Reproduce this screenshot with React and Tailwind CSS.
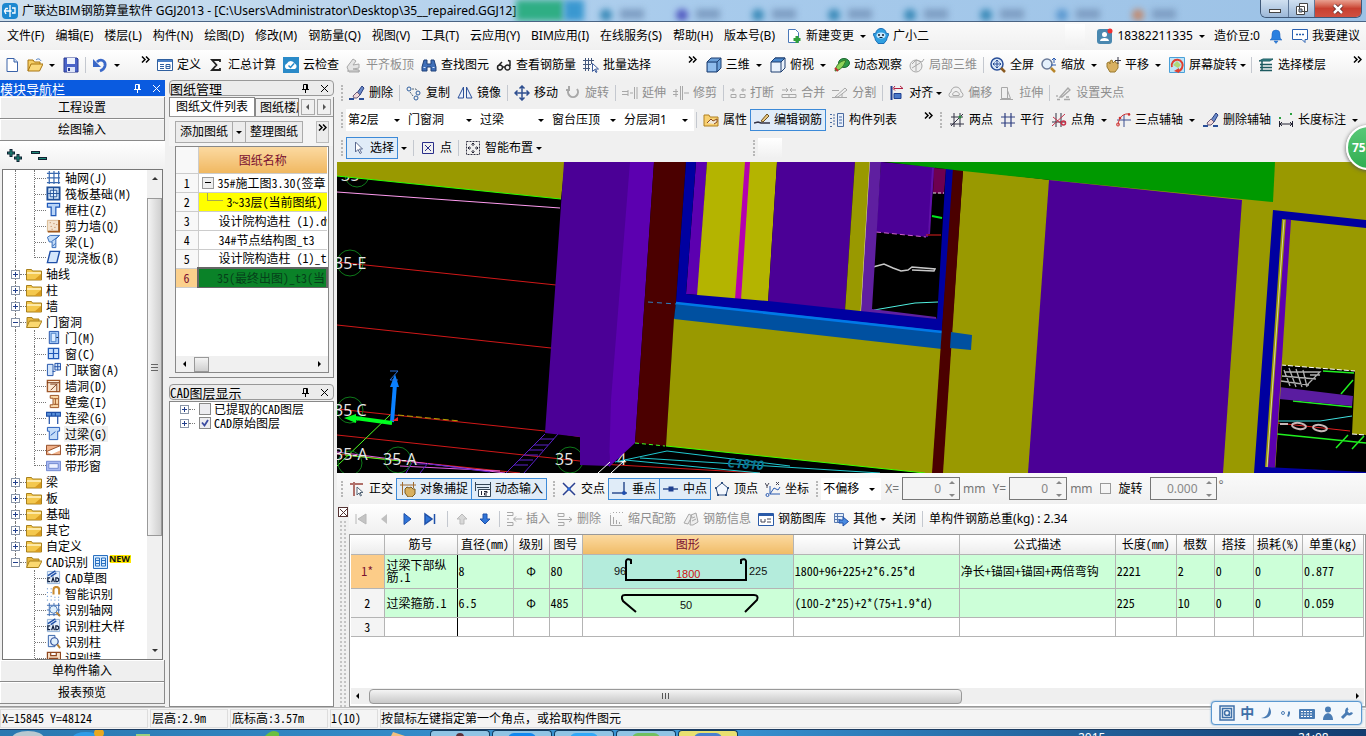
import React from "react";

const UI = "font-['Noto_Sans','Noto_Sans_CJK_SC',sans-serif]";
const SONG = "font-['Noto_Sans_Mono_CJK_SC','Noto_Sans_CJK_SC',monospace]";

const B = "#2f5f9f";
const G = "#a8a8a8";

const shapes = {
  newFile: <><path d="M3 1.5h7l3.500 3.500v9.500H3z" fill="#fff" stroke="#3a62a8" /><path d="M10 1.500v3.500h3.500" fill="#cfe0f8" stroke="#3a62a8" /></>,
  open: <><path d="M1 14V3h5l1.500 2H13v3" fill="#f6cf67" stroke="#a87410" /><path d="M1 14l3-7h12l-3.500 7z" fill="#fbd97c" stroke="#a87410" /><path d="M9 3c2-2 4-1 5 1" fill="none" stroke="#4a7ac0" /></>,
  save: <><path d="M1 1h13l1 1v13H1z" fill="#4a63c8" stroke="#2a3a90" /><path d="M4 1h8v6H4z" fill="#eef2fc" /><path d="M4 10h8v5H4z" fill="#dde4f8" /><path d="M5 11h2v3H5z" fill="#2a3a90" /></>,
  undo: <><path d="M5 5c4-4 9-1 8 4-.500 2-2 4-5 5" fill="none" stroke="#3a68c8" strokeWidth="2.800" /><path d="M1 2v8h8z" fill="#3a68c8" /></>,
  define: <><path d="M.5 2.500h15v11H.5z" fill="#fff" stroke={B} /><path d="M1 3h14v2H1z" fill="#4a80c8" /><path d="M3 7.500h4M3 9.500h4M3 11.500h4M9 7.500h4v4H9zM9 9.500h4" fill="none" stroke={B} /></>,
  sigma: <path d="M12 5V3H4l4.500 5L4 13h8v-2" fill="none" stroke="#222" strokeWidth="1.800" />,
  cloudCheck: <><path d="M0 0h16v16H0z" fill="#2a8ac8" /><path d="M3.500 12a3 3 0 01.5-5.500 4 4 0 017.500 0 3 3 0 01.5 5.500z" fill="#fff" /><path d="M5.500 8.500l2 2 3.500-4" fill="none" stroke="#2a8ac8" strokeWidth="1.500" /></>,
  slabTop: <path d="M1 10l6-8 3 2-3 4 6-1v4l-6 1 6 1v2H3zM1 14h13" fill="#e4e4e4" stroke={G} />,
  find: <><path d="M3 3h3v4h4V3h3l2 7v4h-5v-4H6v4H1v-4z" fill="#3f6fb8" stroke="#1f4078" /><path d="M2.500 10.500h2M11.500 10.500h2" stroke="#cfe0ff" /></>,
  glasses: <path d="M1.500 10.500a2.500 2.500 0 105 0 2.500 2.500 0 10-5 0M9 10.500a2.500 2.500 0 105 0 2.500 2.500 0 10-5 0M6.500 10h2.500M2 9l4-4M14 9V4l-2-.5" fill="none" stroke="#222" strokeWidth="1.500" />,
  batch: <><path d="M2.500 1v13M5.500 1v13M8.500 1v6M0 3.500h11M0 7.500h8M0 11.500h7" stroke="#44577a" fill="none" /><path d="M9.500 6.500v8l2-2 1.500 3 1-.500-1.500-3h3z" fill="#fff" stroke="#3a5a9a" /></>,
  cube: <><path d="M1 5l4-4h10v10l-4 4H1z" fill="#6a9fd8" stroke="#1f3f70" /><path d="M1 5h10v10M11 5l4-4" fill="none" stroke="#1f3f70" /><path d="M2 6h8v8H2z" fill="#8fbcec" /></>,
  cubeTop: <><path d="M1 5l4-4h10v10l-4 4H1z" fill="#eaf2fc" stroke="#1f3f70" /><path d="M1 5l4-4h10l-4 4z" fill="#4a88cc" stroke="#1f3f70" /><path d="M11 5v10" stroke="#1f3f70" /></>,
  orbit: <><ellipse cx="10" cy="6" rx="5.500" ry="4.500" fill="#2f9a48" stroke="#1d6a30" /><path d="M1 14c1-6 5-10 11-11-2 6-5 10-11 11z" fill="#8fd458" stroke="#3a7a28" /><path d="M1 11l3 3" stroke="#c03030" strokeWidth="2" /></>,
  local3d: <><circle cx="7" cy="9" r="6" fill="#eee" stroke={G} /><path d="M3 7l4-4 6 2 2-3M7 3v11M3 11l8-5" fill="none" stroke={G} /></>,
  full: <><circle cx="7" cy="7" r="6" fill="#dceafa" stroke="#2a4f98" strokeWidth="1.500" /><path d="M7 3v8M3 7h8M5.500 4.500L7 3l1.500 1.500M5.500 9.500L7 11l1.500-1.500M4.500 5.500L3 7l1.500 1.500M9.500 5.500L11 7l-1.500 1.500" fill="none" stroke="#2a4f98" /><path d="M11 11l4 4" stroke="#8a5a20" strokeWidth="2.500" /></>,
  zoom: <><circle cx="6" cy="7" r="5" fill="#e4f0fc" stroke="#6a7a98" strokeWidth="1.500" /><path d="M10 11l4 4" stroke="#b8862a" strokeWidth="2.500" /><path d="M13 1v5M11 3l2-2 2 2M10 8h5" fill="none" stroke="#2a5ab0" /></>,
  pan: <><path d="M2 6l2-1 1 2V4l2-1 1 3 2-2 1 2 2 0v5l-3 4H5L2 10z" fill="#d8b060" stroke="#9a7a30" /><path d="M13 0v7M10 3.500h6" stroke="#334" /></>,
  rotScreen: <><path d="M.5.500h15v15H.5z" fill="#bfe4f8" stroke="#4aa0d8" /><path d="M4 8l4-4 4 4-3 3z" fill="#b0d878" /><path d="M3 10a5.500 5.500 0 1110 1 5 5 0 01-5 3" fill="none" stroke="#e04030" strokeWidth="2" /><path d="M5 14l5-3v5z" fill="#e04030" /></>,
  floors: <><path d="M1 4l4-2h10l-3 2z" fill="#3a8a90" stroke="#1d5a60" /><path d="M2 7.500h12M2 10.500h12M2 13.500h12M4 4v10" stroke="#1d5a60" strokeWidth="1.500" /></>,
  erase: <><path d="M8 8l5-7 2 2-4 7z" fill="#6a8ac8" stroke="#2a3f80" /><path d="M8 7l3 3-3 3H5L4 11z" fill="#f0d8d8" stroke="#6a5a7a" /><path d="M0 14h5M10 14h5" stroke="#2a4f98" strokeWidth="2" /></>,
  copy: <><circle cx="3" cy="4" r="2" fill="none" stroke={B} /><circle cx="12" cy="8" r="2" fill="none" stroke={B} /><circle cx="10" cy="13" r="2" fill="none" stroke={B} /><path d="M6 4h4l1 2M4 7l3 4" fill="none" stroke="#567" strokeDasharray="2 1" /></>,
  mirror: <path d="M6.500 2v11H1zM9.500 2v11H15z" fill="#e8f0fc" stroke="#2a4f98" />,
  move: <path d="M8 1v14M1 8h14M5.500 3.500L8 1l2.500 2.500M5.500 12.500L8 15l2.500-2.500M3.500 5.500L1 8l2.500 2.500M12.500 5.500L15 8l-2.500 2.500" fill="none" stroke="#2f4f90" strokeWidth="1.500" />,
  rotate: <path d="M4 4a5 5 0 108 0M4 1v4H1" fill="none" stroke={G} strokeWidth="2" />,
  extend: <path d="M0 6.500h6M0 9.500h6M6 5v6M8 8h3M12.500 2v12M15 2v12" fill="none" stroke={G} />,
  trim: <path d="M0 6.500h5M0 9.500h5M7.500 1v14M9.500 1v14M11 8h5M3 4v8" fill="none" stroke={G} />,
  breakI: <path d="M0 5h5M11 5h5M3 3v4M13 3v4M1 9.500h5v3H1zM10 9.500h5v3h-5z" fill="none" stroke={G} />,
  merge: <path d="M1 5h5M10 5h5M5 3l2 2-2 2M11 3L9 5l2 2M1 9.500h14v3H1zM8 9v4" fill="none" stroke={G} />,
  split: <path d="M0 5.500h7M0 12.500h15M3 12L13 3l2 2-9 7zM10 9v4" fill="none" stroke={G} />,
  align: <><path d="M2.500 1v14" stroke="#1f3f90" strokeWidth="2" /><path d="M5 8.500h7v5H5z" fill="#4a78c8" stroke="#1f3f90" /><path d="M5 3.500h9M11 1l3 2.500M6 1L4 3.500l2 2" fill="none" stroke="#b02040" /></>,
  offset: <path d="M2 12a3 3 0 011-5 5 5 0 0110 0 3 3 0 011 5zM5 10.500a2 2 0 011-3 2.500 2.500 0 014 0 2 2 0 011 3z" fill="none" stroke={G} />,
  stretch: <path d="M2.500 2.500h6v11h-6zM8.500 5.500l3 8h-9M1 14.500h13" fill="none" stroke={G} />,
  grip: <path d="M1 14.500h3M8 14.500h6M4 12L12 3l2 2-8 7zM1 10v2M10 12h3" fill="none" stroke={G} strokeWidth="1.300" />,
  props: <><path d="M1 14V3h5l1 2h8v9z" fill="#f8d070" stroke="#b08020" /><path d="M4 11l4-4 2 2 4-2v3l-3 2" fill="#f0e8d8" stroke="#8a4a20" /></>,
  editBar: <><path d="M0 11l4-1 3 1 9 0" fill="none" stroke="#334" strokeWidth="1.500" /><path d="M7 9l6-7 2 2-6 6z" fill="#e8c880" stroke="#6a5020" /></>,
  list: <><path d="M1 2.500h2M1 6.500h2M1 10.500h2M1 14.500h2M5 2v12" stroke="#4a6aa0" strokeDasharray="2 1" /><path d="M8.500 1.500h6v13h-6z" fill="#e8f0fc" stroke="#4a6aa0" /><path d="M10 5h3M10 8h3M10 11h3" stroke="#4a6aa0" /></>,
  twoPt: <><path d="M5 1v14M11 1v14M1 12h14M2 5h12" stroke="#334" /><path d="M2 14L14 2" stroke="#334" /><circle cx="11" cy="5" r="1.500" fill="#2a8a3a" /></>,
  parallel: <path d="M5 1v14M11 1v14M1 5h14M1 11h14" stroke="#2f3f80" strokeWidth="1.200" />,
  angle: <><path d="M5 1v14M10 1v14M1 10h14" stroke="#334" /><path d="M1 14L14 2M2 5l10 8" stroke="#c83048" /><circle cx="12.500" cy="11" r="2" fill="none" stroke="#c83048" strokeWidth="1.500" /></>,
  three: <><path d="M9 3v12M2 8h14" stroke="#3a4f90" /><path d="M15 2C8 1 4 5 3 13" fill="none" stroke="#d03030" /><circle cx="14" cy="2.500" r="1.300" fill="#d03030" /><circle cx="5" cy="6" r="1.300" fill="#d03030" /><circle cx="3" cy="12.500" r="1.500" fill="none" stroke="#d03030" /></>,
  dim: <><path d="M1.500 9v6M14.500 9v6M1.500 12h13M4 10l-2 2 2 2M12 10l2 2-2 2" fill="none" stroke="#223" /><path d="M1 5h2v2H1zM12 1h2v2h-2z" fill="#2aa040" /></>,
  cursor: <path d="M5.500 2v10l2.500-2.500 2 4 1.500-.800-2-3.700h3z" fill="#fff" stroke="#5a6a90" />,
  point: <path d="M2.500 2.500h11v11h-11zM5 5l6 6M11 5l-6 6" fill="none" stroke="#2a2f8a" />,
  smart: <><path d="M1.500 1.500h13v13h-13z" fill="none" stroke="#334" strokeDasharray="2 1" /><path d="M8 3v3M8 10v3M3 8h3M10 8h3M6.500 4.500L8 3l1.500 1.500M6.500 11.500L8 13l1.500-1.500M4.500 6.500L3 8l1.500 1.500M11.500 6.500L13 8l-1.500 1.500" stroke="#223" /></>,
  ortho: <><path d="M1 3h13M5 1v14" stroke="#b0706a" strokeWidth="2" /><path d="M8 6v8l2-2 1.500 3 1-.500-1.500-3h3z" fill="#fff" stroke="#567" /></>,
  snap: <><path d="M2.500 1v13M13.500 1v6M0 4h16" stroke="#a06a30" /><path d="M5 8l2-2 2 1 2-1 2 2 2 0v5l-3 3H8l-3-4z" fill="#d8b060" stroke="#7a5a20" /></>,
  dyn: <><path d="M.5 1v9M15.500 1v9M0 3.500h16M2 6.500h12" stroke="#345" /><path d="M3.500 8.500h12v7h-12z" fill="#fff" stroke="#345" /><path d="M6.500 10v4M9 10.500h3v1.500H9.500v2H12" fill="none" stroke="#223" /></>,
  cross: <><path d="M2 2l12 12M14 2L2 14" stroke="#2a3f90" strokeWidth="1.500" /><circle cx="8" cy="8" r="1.800" fill="#2a6ad8" /></>,
  perp: <><path d="M0 12h15M12 1v11" stroke="#2f4f90" strokeWidth="1.500" /><circle cx="12" cy="12" r="2" fill="#1f4fb0" /></>,
  mid: <><path d="M0 8h15" stroke="#2f4f90" strokeWidth="1.500" /><path d="M5.500 5.500h5v5h-5z" fill="#1f3f90" /></>,
  vertex: <><path d="M8 2l6 5-2 7H4L2 7z" fill="#f4f8fe" stroke="#2f4f80" /><path d="M7 1h2v2H7zM13 6h2v2h-2zM1 6h2v2H1zM3 13h2v2H3zM11 13h2v2h-2z" fill="#2f4f80" /></>,
  coord: <><path d="M5 5v8h10M5 13l4-6 4 2 2-3" fill="none" stroke="#2a5ab0" /><path d="M0 2l2 3 2-3M2 5v2M11 1l3 3M14 1l-3 3" fill="none" stroke="#445" /><circle cx="2.500" cy="14" r="1.500" fill="none" stroke="#2a5ab0" /></>,
  first: <path d="M3 3v10M13 3v10L5 8z" fill="#c4c4c4" stroke="#b8b8b8" />,
  prev: <path d="M11 3v10L5 8z" fill="#c0c0c0" />,
  next: <path d="M5 2.500v11L12 8z" fill="#2f74d8" stroke="#1f50a8" />,
  last: <path d="M3 3v10l7-5zM12.500 3v10" fill="#2f74d8" stroke="#1f50a8" strokeWidth="1.500" />,
  up: <path d="M8 3l5 5h-3v5H6V8H3z" fill="#d8d8d8" stroke="#bbb" />,
  down: <path d="M8 13L3 8h3V3h4v5h3z" fill="#2f74d8" stroke="#1f50a8" />,
  insert: <path d="M1 1.500h6v3H1M1 11.500h6v3H1M1 8h2M8 8h8M10 5.500L7.500 8l2.500 2.500" fill="none" stroke={G} />,
  remove: <path d="M1 2.500h6v3H1zM1 11.500h6v3H1M1 8.500h14M12 6l3 2.500L12 11" fill="none" stroke={G} />,
  scaleBar: <path d="M2.500 4v10.500H14M2.500 2v.500M5 1.500h1M8 1.500h1M11 1.500h1M14 1.500h1M5.500 6v7M8.500 9v4M11.500 11v2" fill="none" stroke={G} />,
  info: <path d="M1 12l5-9 3 2-4 8zM8 4l5-2 2 9-5 3H7zM9 7l3-1M9 10l4-2" fill="#eee" stroke={G} />,
  lib: <><path d="M.5 2.500h15v12H.5z" fill="#fff" stroke="#2a5aa8" /><path d="M1 3h14v2H1z" fill="#2a5aa8" /><path d="M3 8v3h4V8M9 8h4M9 11h4" fill="none" stroke="#445" /></>,
  other: <><path d="M1.500 2.500h9v9h-9z" fill="#e4eefa" stroke="#5a7ab0" /><path d="M1.500 5.500h9M1.500 8.500h6M4.500 2.500v9" stroke="#5a7ab0" /><path d="M6 9h4V6l5.500 4.500L10 15v-3H6z" fill="#4a8ae0" stroke="#1f50a8" /></>,
  newChange: <><path d="M2.500 1.500h7l3 3v10h-10z" fill="#fff" stroke="#4a78b8" /><path d="M11 8v7M7.500 11.500h7" stroke="#2fa03a" strokeWidth="3" /></>,
  mascot: <><path d="M0 6l3-1a5 4.500 0 0110 0l3 1-2 4a6 5 0 01-2 4l-1 1.500H5L4 14a6 5 0 01-2-4z" fill="#2f9fe0" stroke="#1a6fb8" /><ellipse cx="8" cy="7.500" rx="4.500" ry="3" fill="#c8e8ff" /><circle cx="6" cy="7" r="1" fill="#123" /><circle cx="10" cy="7" r="1" fill="#123" /><path d="M6.500 9.500h3" stroke="#123" /></>,
  avatar: <><rect y="1" width="15" height="15" rx="3" fill="#4a88b0" /><circle cx="7.500" cy="6.500" r="2.500" fill="#fff" /><path d="M3 13c0-4 9-4 9 0z" fill="#fff" /><circle cx="13" cy="3" r="2.500" fill="#f03030" /></>,
  bell: <path d="M2 12c2-1 2-3 2-6a4 4 0 018 0c0 3 0 5 2 6zM6 13h4l-2 2.500z" fill="#2a80e0" stroke="#1f60b8" strokeWidth=".5" />,
  chat: <><path d="M.5 1.500h15v10H13v3l-3-3H.5z" fill="#fff" stroke="#2a60b0" /><path d="M4 6.500h2M7 6.500h2M10 6.500h2" stroke="#2a60b0" strokeWidth="1.500" /></>,
  /* tree */
  folder: <><path d="M.5 3.500h5l1 1.500h9v9H.5z" fill="#f4c84e" stroke="#a8801c" /><path d="M1 6h14v2H1z" fill="#fde9a8" /><path d="M8 14h7V8z" fill="#d89c20" /></>,
  folderOpen: <><path d="M1 13V3.500h5l1 1.500h6v2" fill="#e8b840" stroke="#a8801c" /><path d="M.5 13.500l3-6.500H16l-3.500 6.500z" fill="#fbd870" stroke="#a8801c" /></>,
  axisNet: <path d="M3.500 1v14M8.500 1v14M13.500 1v14M1 3.500h14M1 8.500h14M1 13.500h14" stroke="#3a6ab0" strokeWidth="1.300" />,
  raft: <><path d="M1.500 1.500h13v13h-13z" fill="#dcecfc" stroke="#1f4f98" strokeWidth="2" /><path d="M4.500 4.500h7v7h-7zM8 2v12M2 8h12" fill="none" stroke="#1f4f98" /></>,
  column: <path d="M1.500 1.500h13v4h-4v9h-5v-9h-4z" fill="#b8d4f8" stroke="#1f58b8" strokeWidth="1.300" />,
  shear: <><path d="M1.500 2.500h12v12h-12z" fill="#f4e4d0" stroke="#d8b890" /><path d="M14 2v12.500H2" fill="none" stroke="#a05a20" strokeWidth="2" /><path d="M4 5h1M8 6h1M5 9h1M9 10h1M11 7h1M6 12h1" stroke="#b07040" /></>,
  beamI: <path d="M1.500 3.500l3-2h10l-4 4v9h-4v-6l-3 0zM6 8l8-6M7 13l3-3" fill="#c4dcf8" stroke="#2f68b8" />,
  slab: <path d="M4.500 1.500h10l-3 12h-10z" fill="#d4e6fc" stroke="#1f4fa8" strokeWidth="1.500" />,
  door: <><path d="M3.500 1.500h10v13h-10z" fill="#a8ccf8" stroke="#1f50a8" /><path d="M5.500 3.500h5v9h-5z" fill="#dcecff" stroke="#4a80c8" /><path d="M11 8h2" stroke="#123" /></>,
  windowI: <path d="M2.500 2.500h11v11h-11zM8 2v12M3 8h10" fill="#c8e0fc" stroke="#1f58b8" strokeWidth="1.300" />,
  doorWin: <path d="M1.500 2.500h6v12h-6zM9.500 1.500h6v7h-6zM12.500 1v8M9 5h7M7 10h3" fill="#d4e6fc" stroke="#1f50a8" />,
  hole: <><path d="M1.500 2.500h13v12h-13z" fill="#fbe8d4" stroke="#a0582a" strokeWidth="1.500" /><path d="M4.500 6.500h7v8M5 13l7-7M1 5h13" fill="none" stroke="#7a3a18" /></>,
  niche: <path d="M4.500 1.500h9v13h-9v-3h3v-7h-3zM8 5h5M8 11h5M10 5v6" fill="#fbd8a8" stroke="#9a5020" />,
  linkBeam: <path d="M.5 2.500h15v4h-15zM3.500 7v8M12.500 7v8M6 3v3M10 3v3" fill="#5a90d8" stroke="#1f50a8" strokeWidth="1.300" />,
  lintel: <path d="M1.500 1.500h13v4h-2v9h-9v-9h-2zM5 10l5-4" fill="#c4dcf8" stroke="#1f58b8" />,
  stripHole: <><path d="M.5 3.500h15v10H.5z" fill="#f0b088" stroke="#904820" /><path d="M1 10L15 4v5L6 13z" fill="#fff" /><path d="M1 10l14-6" stroke="#904820" /></>,
  stripWin: <><path d="M.5 3.500h15v10H.5z" fill="#a8b8f0" stroke="#7088d0" /><path d="M3 6h10v5H3z" fill="#eef2ff" stroke="#7088d0" /></>,
  cad: <><path d="M1.500 1.500h13v13h-13z" fill="#e4f0fc" stroke="#90b0d8" /><path d="M2 6l8-5M5 7l6-4" stroke="#1f50a8" strokeWidth="1.500" /><path d="M4.500 8.500H2v4h2.500M6 13l1.500-4.500L9 13M10.500 8.500v4h1.500l1.500-1v-2L12 8.500z" fill="none" stroke="#102040" strokeWidth="1.300" /></>,
  magnet: <><path d="M8 9V4a3 3 0 016 0v5" fill="none" stroke="#c88a30" strokeWidth="2.200" /><path d="M1 3h1M5 3h1M1 7h1M5 7h1M1 11h1M5 11h1M9 12h1M13 12h1M1 15h1M5 15h1M9 15h1M13 15h1" stroke="#3a78c8" /></>,
  gridFind: <><path d="M3.500 1v14M8.500 1v14M13.500 1v14M1 3.500h14M1 8.500h14M1 13.500h14" stroke="#3a6ab0" /><circle cx="8" cy="8" r="4" fill="#e0f0fc" stroke="#4a78b8" /><path d="M11 11l4 4" stroke="#b88030" strokeWidth="2" /></>,
  colFind: <><path d="M2.500 1.500h7v12h-7z" fill="#e8f0fc" stroke="#2f5fa8" /><circle cx="9" cy="8" r="4" fill="#e0f0fc" stroke="#2f4f98" strokeWidth="1.300" /><path d="M12 11l3 4" stroke="#b88030" strokeWidth="2" /></>,
  wallFind: <path d="M1.500 2.500h14v12h-14zM5 3v3h6V3M3 9h10" fill="#f8e0c8" stroke="#904820" strokeWidth="1.300" />,
};

const Ico = ({ n, className = "size-4" }) => (
  <svg viewBox="0 0 16 16" className={className + " shrink-0"} aria-hidden="true" fill="none">{shapes[n]}</svg>
);
const Tri = ({ d = "down", className = "" }) => {
  const p = { down: "M0 2h6L3 5z", up: "M0 4h6L3 1z", left: "M4 0v6L1 3z", right: "M2 0v6l3-3z" }[d];
  return <svg viewBox="0 0 6 6" className={"size-1.5 shrink-0 " + className} aria-hidden="true"><path d={p} fill="currentColor" /></svg>;
};
const Sep = () => <span className="-mx-px h-4 w-px shrink-0 bg-[#c4c8cf]" />;
const Grip = () => <span className="h-4 w-0 shrink-0 border-l-2 border-dotted border-[#b8b8b8]" />;
const Chevrons = () => <svg viewBox="0 0 9 7" className="h-[7px] w-[9px]" aria-hidden="true" fill="none"><path d="M1 .500l3 3-3 3M5 .500l3 3-3 3" stroke="#000" strokeWidth="1.500" /></svg>;
const More = ({ className = "" }) => <button aria-label="更多" className={"mb-2.5 shrink-0 " + className}><Chevrons /></button>;

function Tool({ i, t, off, on, arrow, label }) {
  return (
    <button
      disabled={off}
      aria-label={t ? undefined : label}
      className={
        "flex h-[22px] shrink-0 items-center gap-1 whitespace-nowrap " +
        (on ? "-mx-1 border border-[#3c8ad8] bg-[#e0ecf8] px-[3px] " : "") +
        (off ? "text-[#8e8e8e]" : "text-black")
      }
    >
      {i && <Ico n={i} />}
      {t && <span>{t}</span>}
      {arrow === "near" && <Tri className="-mx-px" />}
      {arrow === "split" && <Tri className="mr-px ml-0.5" />}
    </button>
  );
}

const Combo = ({ v, w }) => (
  <label className={"relative flex h-[22px] shrink-0 items-center bg-white " + w}>
    <select aria-label={v} className="h-full w-full appearance-none bg-transparent pl-0.5 outline-none"><option>{v}</option></select>
    <Tri className="absolute right-1.5" />
  </label>
);
const bar = "flex shrink-0 items-center gap-[7px] overflow-hidden";

const leaf1 = [["axisNet", "轴网(J)"], ["raft", "筏板基础(M)"], ["column", "框柱(Z)"], ["shear", "剪力墙(Q)"], ["beamI", "梁(L)"], ["slab", "现浇板(B)"]];
const leaf2 = [["door", "门(M)"], ["windowI", "窗(C)"], ["doorWin", "门联窗(A)"], ["hole", "墙洞(D)"], ["niche", "壁龛(I)"], ["linkBeam", "连梁(G)"], ["lintel", "过梁(G)"], ["stripHole", "带形洞"], ["stripWin", "带形窗"]];
const leaf3 = [["cad", "CAD草图"], ["magnet", "智能识别"], ["gridFind", "识别轴网"], ["cad", "识别柱大样"], ["colFind", "识别柱"], ["wallFind", "识别墙"]];

const Expander = ({ open }) => (
  <button aria-label={open ? "折叠" : "展开"} className="grid size-[9px] shrink-0 place-items-center border border-[#8a96a8] bg-white">
    <svg viewBox="0 0 5 5" className="size-[5px]"><path d={open ? "M0 2.500h5" : "M0 2.500h5M2.500 0v5"} stroke="#23408c" /></svg>
  </button>
);

function Leaf({ i, t, root = true, last, sel }) {
  return (
    <li className="flex h-4 shrink-0 items-stretch">
      <span className={"ml-3 w-[19px] shrink-0 " + (root ? "border-l border-dotted border-[#777]" : "")} />
      <span className={"flex w-3 shrink-0 " + (last ? "items-start" : "items-center border-l border-dotted border-[#777]")}>
        <span className={"w-full border-dotted border-[#777] " + (last ? "h-2 border-b border-l" : "border-t")} />
      </span>
      <Ico n={i} className="size-[15px]" />
      <span className={"ml-[3px] px-px leading-4 whitespace-nowrap " + (sel ? "bg-[#f0f0f0]" : "")}>{t}</span>
    </li>
  );
}
function Folder({ t, open, last, children }) {
  return (
    <li className="flex h-4 shrink-0 items-center">
      <span className="ml-2 flex h-full w-[9px] shrink-0 flex-col items-center">
        <span className="flex-1 border-l border-dotted border-[#777]" />
        <Expander open={open} />
        <span className={"flex-1 " + (last ? "" : "border-l border-dotted border-[#777]")} />
      </span>
      <span className="w-1.5 shrink-0 border-t border-dotted border-[#777]" />
      <Ico n={open ? "folderOpen" : "folder"} />
      <span className="ml-1 leading-4 whitespace-nowrap">{t}</span>
      {children}
    </li>
  );
}

const Pin = () => <svg viewBox="0 0 9 9" className="size-[9px]" aria-hidden="true"><path d="M2.500.500h4v5M2.500.500v5M5.500 1v4.500M1 5.500h7M4.500 6v3" stroke="currentColor" fill="none" /></svg>;
const X = () => <svg viewBox="0 0 9 9" className="size-[9px]" aria-hidden="true"><path d="M1 1l7 7M8 1L1 8" stroke="currentColor" fill="none" /></svg>;
const PanelHead = ({ t, active }) => (
  <div className={"flex h-4 shrink-0 items-center " + (active ? "bg-[#0a5be0] text-white" : "rounded-sm border border-[#999] bg-[#ececec]")}>
    <h2 className={"flex-1 text-[13px] leading-none whitespace-nowrap " + SONG}>{t}</h2>
    <button aria-label="固定" className="mr-2.5"><Pin /></button>
    <button aria-label="关闭面板" className="mr-1"><X /></button>
  </div>
);
const NavBtn = ({ t }) => <button className="h-[22px] shrink-0 border-r border-b border-[#8a8a8a] bg-[#efefef] shadow-[inset_1px_1px_0_#fff]">{t}</button>;

function ModulePanel() {
  return (
    <aside className="flex w-[165px] shrink-0 flex-col border-b border-[#999] pb-0.5">
      <PanelHead t="模块导航栏" active />
      <div className="h-px" />
      <NavBtn t="工程设置" />
      <NavBtn t="绘图输入" />
      <div className="flex h-7 shrink-0 items-center gap-2 bg-gradient-to-b from-white to-[#f0f0f0] pl-1.5">
        <button aria-label="全部展开"><svg viewBox="0 0 17 15" className="h-[15px] w-[17px]"><path d="M5 1v8M1 5h8M12 6v8M8 10h8" stroke="#123" strokeWidth="3" /><path d="M5 2v6M2 5h6M12 7v6M9 10h6" stroke="#1d8a78" strokeWidth="1.200" /></svg></button>
        <button aria-label="全部折叠"><svg viewBox="0 0 17 15" className="h-[15px] w-[17px]"><path d="M0 4.500h9M7 10.500h9" stroke="#123" strokeWidth="3" /><path d="M1 4.500h7M8 10.500h7" stroke="#1d8a78" strokeWidth="1.200" /></svg></button>
      </div>
      <div className="mx-0.5 flex min-h-0 flex-1 basis-0 border border-[#777] bg-white">
        <ul className={"flex min-w-0 flex-1 flex-col overflow-hidden " + SONG}>
          {leaf1.map(([i, t], k) => <Leaf key={t} i={i} t={t} last={k === 5} />)}
          {["轴线", "柱", "墙"].map((t) => <Folder key={t} t={t} />)}
          <Folder t="门窗洞" open />
          {leaf2.map(([i, t], k) => <Leaf key={t} i={i} t={t} last={k === 8} sel={k === 6} />)}
          {["梁", "板", "基础", "其它", "自定义"].map((t) => <Folder key={t} t={t} />)}
          <Folder t="CAD识别" open last>
            <svg viewBox="0 0 40 16" className="ml-1 h-4 w-10 shrink-0"><path d="M1.500 1.500h14v13h-14z" fill="#d8ecff" stroke="#2a70c0" /><path d="M3.500 4h4v8h-4zM9.500 4h4v8h-4zM4 6.500h3M4 9.500h3M10 6.500h3M10 9.500h3" fill="none" stroke="#2a70c0" /><path d="M18 1h21v8H18z" fill="#ffe800" /><text x="17" y="8" fontSize="9" fontWeight="bold" fill="#111" fontFamily="Open Sans">NEW</text></svg>
          </Folder>
          {leaf3.map(([i, t]) => <Leaf key={t} i={i} t={t} root={false} />)}
        </ul>
        <div className="flex w-[15px] shrink-0 flex-col items-center bg-[#f0f0f0] py-1.5">
          <Tri d="up" className="text-[#333]" />
          <span className="mt-4 grid h-[338px] w-full shrink-0 place-items-center border border-[#999] bg-gradient-to-r from-[#f4f4f4] to-[#cfcfcf]">
            <svg viewBox="0 0 7 9" className="h-[9px] w-[7px]"><path d="M0 1.500h7M0 4.500h7M0 7.500h7" stroke="#666" /></svg>
          </span>
          <Tri className="mt-auto text-[#333]" />
        </div>
      </div>
      <NavBtn t="单构件输入" />
      <NavBtn t="报表预览" />
    </aside>
  );
}

const sheets = ["35#施工图3.30(签章", "3~33层(当前图纸)", "设计院构造柱 (1).dwg", "34#节点结构图_t3", "设计院构造柱 (1)_t3", "35(最终出图)_t3(当"];

function SheetPanel() {
  return (
    <aside className="flex w-[165px] shrink-0 flex-col">
      <PanelHead t="图纸管理" />
      <div className="mt-px flex h-[281px] shrink-0 flex-col border-r border-b border-[#888]">
        <div className="flex h-5 shrink-0 items-end overflow-hidden border-b border-[#999]">
          <button className="h-full shrink-0 border border-b-0 border-[#888] bg-white px-1.5">图纸文件列表</button>
          <button className="h-[18px] w-[44px] shrink-0 overflow-hidden border border-b-0 border-[#888] pl-1 text-left whitespace-nowrap">图纸楼层</button>
          <button aria-label="上一页" className="ml-0.5 grid h-4 w-3.5 place-items-center self-center border border-[#aaa] text-[#555]"><Tri d="left" /></button>
          <button aria-label="下一页" className="ml-0.5 grid h-4 w-3.5 place-items-center self-center border border-[#aaa] text-[#555]"><Tri d="right" /></button>
        </div>
        <div className="flex h-[29px] shrink-0 items-center bg-[#f4f4f4] pl-1.5">
          <button className="h-[22px] border border-[#aaa] bg-[#ececec] px-1 whitespace-nowrap">添加图纸</button>
          <button aria-label="添加图纸选项" className="-ml-px grid h-[22px] w-3.5 place-items-center border border-[#aaa] bg-[#ececec]"><Tri /></button>
          <button className="-ml-px h-[22px] border border-[#aaa] bg-[#ececec] px-1 whitespace-nowrap">整理图纸</button>
          <button aria-label="更多" className="mr-1 ml-auto h-[22px] border border-[#bbb] bg-[#ececec] px-px pb-2"><Chevrons /></button>
        </div>
        <div className="mr-1 mb-1 ml-1.5 flex flex-1 flex-col overflow-hidden border border-[#888] bg-white">
          <table className={"w-full table-fixed border-collapse " + SONG}>
            <colgroup><col className="w-[22px]" /><col /></colgroup>
            <thead><tr className="h-[26px]"><th className="border-r border-b border-[#ccc] bg-[#f8f8f8]"><span className="sr-only">行号</span></th><th className="border-b border-[#ccc] bg-gradient-to-b from-[#fbd9a0] to-[#f0b860] font-normal text-[#7a1030]">图纸名称</th></tr></thead>
            <tbody>
              {sheets.map((s, k) => (
                <tr key={s} className="h-[19px] leading-[18px]">
                  <td className={"border-r border-b border-[#ccc] p-0 text-center " + (k === 5 ? "bg-[#fbd08c] text-[#7a1030]" : "bg-[#f8f8f8]")}>{k + 1}</td>
                  <td className={"overflow-hidden border-b p-0 whitespace-nowrap " + (k === 1 ? "border-[#ccc] bg-[#ffff00]" : k === 5 ? "border-2 border-[#666] bg-[#0a8228] text-[#06401a]" : "border-[#ccc]")}>
                    <span className="flex h-[17px] items-center">
                      {k === 0 && <button aria-label="折叠" className="mr-1 ml-[3px] grid size-3 shrink-0 place-items-center border border-[#999] bg-[#eee]"><span className="h-px w-1.5 bg-black" /></button>}
                      {k === 1 && <span className="mr-1 ml-2 h-2 w-4 shrink-0 self-start border-b border-l border-[#a8a850]" />}
                      <span className={k < 2 ? "" : k === 5 ? "ml-[18px]" : "ml-5"}>{s}</span>
                    </span>
                  </td>
                </tr>
              ))}
            </tbody>
          </table>
          <div className="mt-auto flex h-4 shrink-0 items-center bg-[#f0f0f0] px-1.5">
            <Tri d="left" /><span className="ml-1.5 h-[15px] w-[15px] border border-[#999] bg-gradient-to-b from-[#f4f4f4] to-[#cfcfcf]" /><Tri d="right" className="ml-auto" />
          </div>
        </div>
      </div>
      <div className="h-1.5 shrink-0" />
      <PanelHead t="CAD图层显示" />
      <ul className={"mt-px flex-1 border border-[#888] bg-white pl-2.5 " + SONG}>
        {[["已提取的CAD图层", false], ["CAD原始图层", true]].map(([t, c]) => (
          <li key={t} className="flex h-3.5 items-center">
            <Expander />
            <span className="mr-1 w-1.5 border-t border-dotted border-[#777]" />
            <label className="relative flex items-center gap-[3px] leading-[14px]">
              <input type="checkbox" defaultChecked={c} className="size-3 appearance-none border border-[#888] bg-[#ececf0]" />
              {c && <svg viewBox="0 0 12 12" className="pointer-events-none absolute left-0 size-3"><path d="M3 5.500l2.500 3L9 3" stroke="#3a4aa0" strokeWidth="1.800" fill="none" /></svg>}
              {t}
            </label>
          </li>
        ))}
      </ul>
    </aside>
  );
}

const P = ({ p, f }) => <polygon points={p} fill={f} />;
function Scene() {
  return (
    <svg viewBox="337 162 1029 311" preserveAspectRatio="xMinYMin slice" className="min-h-0 w-full flex-1 basis-0 bg-black" role="img" aria-label="三维视图" fill="none">
      <path d="M337 192L560 208" stroke="#ff9cf0" />
      <path d="M337 262L556 285M337 325L551 348M337 409L545 431L582 437M337 435L580 461M337 454L520 473M600 464L760 473" stroke="#d01818" />
      <path d="M337 452L430 464L505 473M400 466L500 471" stroke="#e060e0" />
      <path d="M398 415L460 421" stroke="#b0a000" strokeDasharray="6 3" />
      <path d="M337 466L390 415M345 455L400 461" stroke="#4cff20" />
      <path d="M545 434L506 473M558 434L524 473M540 439h14M534 445h14M529 450h14M524 455h14M519 460h14M514 465h14M412 463l-6 10M428 463l-8 10M416 464h10M430 464l60 8" stroke="#5a20c8" />
      <g stroke="#0e7a1a"><circle cx="350" cy="263" r="13" /><circle cx="350" cy="410" r="13" /><circle cx="350" cy="463" r="12" /><circle cx="398" cy="460" r="13" /><circle cx="570" cy="460" r="13" /><circle cx="357" cy="175" r="12" /></g>
      <text x="341" y="181" fill="#e8e8e8" fontFamily="Open Sans" fontSize="16">35</text>
      <P p="337,162 565,162 561,199 337,176" f="#999900" />
      <path d="M337 176L561 199" stroke="#2bff00" />
      <g fill="#e8e8e8" fontFamily="Open Sans" fontSize="16">
        <text x="334" y="269">35-E</text><text x="334" y="416">35 C</text><text x="334" y="460">35-A</text><text x="383" y="465">35-A</text><text x="555" y="465">35</text><text x="617" y="465">4</text>
      </g>
      <path d="M392 422L395 384" stroke="#0a80ff" strokeWidth="4" /><path d="M390 387l5-13 4 13z" fill="#0a80ff" /><path d="M390 371h8l-8 9h8" stroke="#2a70d8" />
      <path d="M392 423L355 418" stroke="#00ff20" strokeWidth="4" /><path d="M344 418l12-4v9z" fill="#00ff20" /><path d="M392 421l6-4v4z" fill="#f02020" />
      <P p="564,162 631,162 609,466 580,465 580,437 545,433" f="#4b0096" />
      <P p="630,162 654,162 635,443 609,467 611,400" f="#5c00b0" />
      <P p="654,162 686,162 676,302 674,320 666,446 635,443" f="#4b0000" />
      <path d="M635 443L665 446" stroke="#40ff20" strokeDasharray="4 3" />
      <path d="M648 302l28 2" stroke="#2f80c0" strokeDasharray="5 4" />
      <path d="M615 462L667 451L790 466M625 460L760 473M640 458L880 473" stroke="#20c8d0" />
      <text x="727" y="467" fill="#0a7898" fontFamily="Open Sans" fontSize="13" fontStyle="italic" fontWeight="bold" transform="rotate(5 727 467)">C1810</text>
      <path d="M610 462l-12 11M625 460l-14 13" stroke="#fff" />
      <P p="674,318 945,345 934,473 925,473 666,446" f="#999900" />
      <path d="M666 446L925 473" stroke="#40ff00" />
      <P p="696,162 707,162 698,295 686,294" f="#5c00b0" />
      <P p="707,162 777,162 768,303 697,296" f="#b4b400" />
      <P p="745,162 750,162 741,300 735,299" f="#b400b0" />
      <P p="777,162 855,162 845,311 768,303" f="#4b0096" />
      <P p="855,162 870,162 861,313 845,311" f="#999900" />
      <path d="M870 162L861 312" stroke="#e0dca0" />
      <P p="881,162 935,167 928,237 876,232" f="#4b0096" />
      <path d="M933 168L929 234" stroke="#6010a8" strokeWidth="2" />
      <path d="M876 232L926 237" stroke="#d060d0" strokeDasharray="5 3" />
      <P p="934,168 946,169 944,194 933,193" f="#6e0050" />
      <path d="M933 193h11" stroke="#ddd" strokeDasharray="3 2" />
      <path d="M873 267l11-3 9 4 8 3 7-1 4-3 23 2-1 2-22-1" stroke="#c8c8c8" strokeWidth="1.500" />
      <path d="M932 216l10 2" stroke="#00e820" strokeWidth="2" /><path d="M926 235h15" stroke="#e02020" />
      <path d="M874 310L915 303L938 302" stroke="#50f0e0" />
      <P p="870,162 881,162 872,309 936,317 937,321 861,313" f="#5f1fa0" />
      <P p="686,162 696,162 686,294 768,301 860,311 937,319 946,168 954,169 942,332 676,302" f="#0000a0" />
      <P p="676,302 943,331 942,349 674,319" f="#0050a0" />
      <path d="M676 303L942 332" stroke="#0078e8" strokeWidth="2.500" />
      <P p="963,170 1050,180 1366,162 1366,473 942,473" f="#999900" />
      <P p="1260,162 1366,162 1366,300 1260,300" f="#999900" />
      <P p="953,168 963,170 943,473 932,473" f="#4b0000" />
      <P p="951,332 972,335 971,350 950,348" f="#0050a0" />
      <P p="886,162 1275,162 1273,202 1050,180 963,171" f="#009900" />
      <P p="1049,180 1242,200 1223,473 1028,473" f="#4b0096" />
      <P p="1281,365 1355,371 1352,434 1366,435 1366,473 1264,473" f="#000" />
      <path d="M1281 365L1355 371M1352 434l14 1" stroke="#fff" strokeDasharray="5 2" />
      <path d="M1284 370l6 16M1289 368l7 19M1296 369l6 18M1303 370l4 17M1281 381l28 4M1284 372l36 0-14 14M1310 375l10 0M1282 376l34 3" stroke="#b0b0b0" strokeWidth="1.300" />
      <path d="M1323 371l31 2M1353 380l-12 14M1293 401L1352 407M1277 434L1366 443M1348 435l-12 13M1364 436l-12 13" stroke="#20f020" strokeWidth="1.500" />
      <P p="1279,387 1353,396 1352,406 1279,399" f="#5a1ca0" />
      <path d="M1277 421h43l32-5" stroke="#40e0e0" /><path d="M1277 423L1350 431" stroke="#e02020" />
      <g stroke="#c8b8b8" strokeWidth="2"><path d="M1280 424h8" /><ellipse cx="1299" cy="426" rx="7" ry="3" transform="rotate(8 1299 426)" /><ellipse cx="1320" cy="428" rx="7" ry="3" transform="rotate(8 1320 428)" /></g>
      <P p="1282,219 1292,220 1275,473 1264,473" f="#999900" />
      <path d="M1284 220L1267 468" stroke="#d8d4a8" />
      <P p="1286,219 1291,220 1275,468 1268,467" f="#5c00b0" />
      <P p="1273,210 1366,220 1366,228 1282,219 1265,467 1366,472 1366,473 1254,473" f="#0000a0" />
    </svg>
  );
}

const Spin = ({ v, w, label }) => (
  <span className={"flex h-[23px] shrink-0 items-center border border-[#777] bg-[#f4f4f4] pr-1 text-[#888] " + w}>
    <input aria-label={label} defaultValue={v} className="w-0 min-w-0 flex-1 bg-transparent pr-2 text-right outline-none" />
    <span className="flex flex-col gap-1.5"><Tri d="up" /><Tri /></span>
  </span>
);

const heads = ["", "筋号", "直径(mm)", "级别", "图号", "图形", "计算公式", "公式描述", "长度(mm)", "根数", "搭接", "损耗(%)", "单重(kg)"];
const cols = ["w-[33px]", "w-[73px]", "w-[56px]", "w-[36px]", "w-[33px]", "w-[211px]", "w-[166px]", "w-[156px]", "w-[61px]", "w-[38px]", "w-[39px]", "w-[49px]", "w-[61px]"];
const Bar1 = () => (
  <svg viewBox="0 0 210 33" className="mx-auto h-[33px] w-[210px]" fill="none"><path d="M48 9V5q-4-2-5 1v19h120V6q-1-3-5-1v4" stroke="#000" strokeWidth="2" /><g fontFamily="Liberation Sans" fontSize="11"><text x="31" y="20" fill="#111">96</text><text x="166" y="20" fill="#111">225</text><text x="93" y="23" fill="#d01010">1800</text></g></svg>
);
const Bar2 = () => (
  <svg viewBox="0 0 210 28" className="mx-auto h-7 w-[210px]" fill="none"><path d="M53 23L40 12q-3-6 2-6h129q5 0 3 5l-12 12" stroke="#000" strokeWidth="2" /><text x="97" y="20" fontSize="11" fontFamily="Liberation Sans" fill="#111">50</text></svg>
);
const rows = [
  ["1*", "过梁下部纵筋.1", "8", "Φ", "80", <Bar1 />, "1800+96+225+2*6.25*d", "净长+锚固+锚固+两倍弯钩", "2221", "2", "0", "0", "0.877"],
  ["2", "过梁箍筋.1", "6.5", "Φ", "485", <Bar2 />, "(100-2*25)+2*(75+1.9*d)", "", "225", "10", "0", "0", "0.059"],
  ["3", "", "", "", "", "", "", "", "", "", "", "", ""],
];
const rowH = ["h-[34px]", "h-[29px]", "h-[19px]"];

function RebarPanel() {
  return (
    <section className="flex h-[203px] shrink-0">
      <div className="flex w-3 shrink-0 flex-col items-center gap-1 pt-[3px]">
        <button aria-label="关闭钢筋面板" className="grid size-2.5 place-items-center border border-[#533] bg-white text-[#533]"><X /></button>
        <span className="w-1.5 flex-1 border-x-2 border-dotted border-[#c4c4c4]" />
      </div>
      <div className="flex min-w-0 flex-1 flex-col">
        <div className={bar + " h-[30px] bg-gradient-to-b from-white to-[#f0f0f0] pl-1"}>
          <Tool i="first" label="首行" off /><Tool i="prev" label="上一行" off /><Tool i="next" label="下一行" /><Tool i="last" label="末行" /><span className="-ml-1" /><Sep /><Tool i="up" label="上移" off /><Tool i="down" label="下移" /><Sep />
          <Tool i="insert" t="插入" off /><Tool i="remove" t="删除" off /><Tool i="scaleBar" t="缩尺配筋" off /><Tool i="info" t="钢筋信息" off /><Tool i="lib" t="钢筋图库" /><Tool i="other" t="其他" arrow="near" /><Tool t="关闭" /><Sep />
          <span className="whitespace-nowrap">单构件钢筋总重(kg) : 2.34</span>
        </div>
        <div className="flex min-h-0 flex-1 flex-col overflow-hidden border border-[#999] bg-white px-px">
          <table className={"w-full table-fixed border-collapse leading-3 " + SONG}>
            <colgroup>{cols.map((c, k) => <col key={k} className={c} />)}</colgroup>
            <thead>
              <tr className="h-[19px]">{heads.map((h, k) => <th key={k} className={"border-r border-b border-[#b4b4b4] p-0 font-normal whitespace-nowrap " + (k === 5 ? "bg-gradient-to-b from-[#fbd9a0] to-[#f0bc66] text-[#7a1030]" : "bg-gradient-to-b from-white to-[#ececec]")}>{h || <span className="sr-only">行号</span>}</th>)}</tr>
            </thead>
            <tbody>
              {rows.map((r, ri) => (
                <tr key={ri} className={rowH[ri]}>
                  {r.map((c, k) => (
                    <td key={k} className={"border-b border-[#b4b4b4] p-0 " + (k === 1 ? "border-r border-r-black pl-0.5 break-all " : "border-r ") + (k === 0 ? (ri === 0 ? "bg-[#fccc88] text-center text-[#7a1030] " : "bg-[#f4f4f4] text-center ") : ri === 2 ? "" : k === 5 && ri === 0 ? "bg-[#b4ecdc] " : "bg-[#ccffd8] ") + (k === 3 ? "text-center" : k > 1 && k !== 5 ? "pl-px whitespace-nowrap" : "")}>{c}</td>
                  ))}
                </tr>
              ))}
            </tbody>
          </table>
          <div className="mt-auto mb-0.5 flex h-4 shrink-0 items-center bg-[#efefef] px-1">
            <Tri d="left" className="mr-2" />
            <span className="grid h-[15px] w-[59%] place-items-center rounded-sm border border-[#999] bg-gradient-to-b from-[#f4f4f4] to-[#c8c8c8]"><svg viewBox="0 0 9 6" className="h-1.5 w-[9px]"><path d="M1.500 0v6M4.500 0v6M7.500 0v6" stroke="#555" /></svg></span>
            <Tri d="right" className="ml-auto" />
          </div>
        </div>
      </div>
    </section>
  );
}

const menus = ["文件(F)", "编辑(E)", "楼层(L)", "构件(N)", "绘图(D)", "修改(M)", "钢筋量(Q)", "视图(V)", "工具(T)", "云应用(Y)", "BIM应用(I)", "在线服务(S)", "帮助(H)", "版本号(B)"];
const blobs = ["bg-[#3a8ab8]", "bg-[#5058c0]", "bg-[#3a8ab8]", "bg-[#3a8ab8]", "bg-[#3a8ab8]", "bg-[#3a8ab8]", "bg-[#5a98d0]", "bg-[#c08a70]"];

function TitleBar() {
  return (
    <header className="relative flex h-[22px] shrink-0 items-center overflow-hidden border-b border-[#4a6484] bg-gradient-to-r from-[#cfe0ee] via-[#a8cbec] to-[#9cc2e6] pl-0.5">
      <svg viewBox="0 0 16 16" className="size-4 shrink-0"><rect width="16" height="16" rx="4" fill="#1d88d0" /><path d="M8 2v12M2.500 8h7M6 5.500H4L2.500 8 4 11M10 5h3v5h-3" fill="none" stroke="#fff" strokeWidth="1.300" /></svg>
      <h1 className="ml-1 text-[12px] whitespace-nowrap">广联达BIM钢筋算量软件 GGJ2013 - [C:\Users\Administrator\Desktop\35__repaired.GGJ12]</h1>
      <span className="h-full w-12 shrink-0 bg-[#2fae84] blur-[3px]" /><span className="h-full w-5 shrink-0 bg-[#3a98d0] blur-[3px]" />
      <div className="ml-4 flex min-w-0 flex-1 gap-8 overflow-hidden pt-2 blur-[3px]">
        {blobs.map((b, k) => <span key={k} className="flex shrink-0 gap-2"><span className={"size-3 rounded-full " + b} /><span className="h-2.5 w-6 bg-[#7f9fc4]" /></span>)}
      </div>
      <div className="mr-1 flex h-[18px] shrink-0 self-start overflow-hidden rounded-b-md border border-t-0 border-[#3f5878]">
        <button aria-label="最小化" className="grid w-7 place-items-center border-r border-[#5f7898] bg-gradient-to-b from-[#d0e0f0] to-[#9cb8d8]"><span className="mt-1 h-1 w-3 border border-[#444] bg-white" /></button>
        <button aria-label="还原" className="grid w-[26px] place-items-center border-r border-[#5f7898] bg-gradient-to-b from-[#d0e0f0] to-[#9cb8d8]"><svg viewBox="0 0 12 12" className="size-3"><path d="M3.500.500h8v8h-8zM.5 3.500h8v8h-8z" fill="#fff" stroke="#444" /><path d="M3 6h3v3H3z" fill="#9cb8d8" stroke="#444" /></svg></button>
        <button aria-label="关闭" className="grid w-[46px] place-items-center bg-gradient-to-b from-[#e8a090] via-[#c84030] to-[#d05040]"><svg viewBox="0 0 12 10" className="h-2.5 w-3"><path d="M2 1l8 8M10 1L2 9" stroke="#522" strokeWidth="4" /><path d="M2 1l8 8M10 1L2 9" stroke="#fff" strokeWidth="2.500" /></svg></button>
      </div>
    </header>
  );
}

export default function App() {
  return (
    <div className={"relative flex h-screen w-full flex-col overflow-hidden bg-[#f0f0f0] text-[12px] leading-4 text-black " + UI}>
      <TitleBar />
      <nav className="flex h-7 shrink-0 items-center gap-[11px] overflow-hidden bg-gradient-to-b from-[#fafafa] to-[#f0f0f0] pl-[7px]">
        {menus.map((m) => <button key={m} className="shrink-0 whitespace-nowrap">{m}</button>)}
        <Tool i="newChange" t="新建变更" arrow="split" />
        <span className="-ml-4" />
        <Tool i="mascot" t="广小二" />
        <div className="ml-auto flex shrink-0 items-center gap-2 pr-1.5">
          <span className="mr-1 h-6 w-5 bg-gradient-to-b from-white to-[#f0f0f0]" />
          <Tool i="avatar" t="18382211335" arrow="split" /><span>造价豆:0</span><Tool i="bell" label="通知" /><Tool i="chat" t="我要建议" />
        </div>
      </nav>
      <div className={bar + " h-[29px] bg-gradient-to-b from-white to-[#f0f0f0] pl-1"}>
        <div className="flex w-[146px] shrink-0 items-center gap-[7px]">
          <Tool i="newFile" label="新建" /><Tool i="open" label="打开" arrow="split" /><Tool i="save" label="保存" /><Sep /><Tool i="undo" label="撤销" arrow="split" /><More className="ml-auto" />
        </div>
        <Tool i="define" t="定义" /><Tool i="sigma" t="汇总计算" /><Tool i="cloudCheck" t="云检查" /><Tool i="slabTop" t="平齐板顶" off /><Tool i="find" t="查找图元" /><Tool i="glasses" t="查看钢筋量" /><Tool i="batch" t="批量选择" />
        <More className="mr-0.5 ml-auto" />
        <Tool i="cube" t="三维" arrow="split" /><Tool i="cubeTop" t="俯视" arrow="split" /><Tool i="orbit" t="动态观察" /><Tool i="local3d" t="局部三维" off /><Sep /><Tool i="full" t="全屏" /><Tool i="zoom" t="缩放" arrow="split" /><Tool i="pan" t="平移" arrow="split" /><Tool i="rotScreen" t="屏幕旋转" arrow="near" /><Sep /><Tool i="floors" t="选择楼层" />
        <More className="mr-1 ml-5" />
      </div>
      <main className="flex min-h-0 flex-1 gap-1 pt-px">
        <ModulePanel />
        <SheetPanel />
        <div className="-ml-px flex min-w-0 flex-1 flex-col">
          <div className={bar + " h-[26px] pl-1"}>
            <Grip /><span className="-ml-2" />
            <Tool i="erase" t="删除" /><Sep /><Tool i="copy" t="复制" /><Tool i="mirror" t="镜像" /><Sep /><Tool i="move" t="移动" /><Tool i="rotate" t="旋转" off /><Sep /><Tool i="extend" t="延伸" off /><Tool i="trim" t="修剪" off /><Sep /><Tool i="breakI" t="打断" off /><Tool i="merge" t="合并" off /><Tool i="split" t="分割" off /><Sep /><Tool i="align" t="对齐" arrow="near" /><Tool i="offset" t="偏移" off /><Tool i="stretch" t="拉伸" off /><Sep /><Tool i="grip" t="设置夹点" off />
          </div>
          <div className={bar + " h-7 pl-1"}>
            <Grip />
            <div className="-mr-1 -ml-1 flex shrink-0"><Combo v="第2层" w="w-[60px]" /><Combo v="门窗洞" w="w-[72px]" /><Combo v="过梁" w="w-[72px]" /><Combo v="窗台压顶" w="w-[72px]" /><Combo v="分层洞1" w="w-[72px]" /></div>
            <Sep /><Tool i="props" t="属性" /><Tool i="editBar" t="编辑钢筋" on /><Tool i="list" t="构件列表" />
            <More className="ml-auto" /><Grip />
            <Tool i="twoPt" t="两点" /><Tool i="parallel" t="平行" /><Tool i="angle" t="点角" arrow="split" /><Tool i="three" t="三点辅轴" arrow="split" /><Tool i="erase" t="删除辅轴" /><Tool i="dim" t="长度标注" arrow="split" /><span />
          </div>
          <div className={bar + " h-7 pl-1"}>
            <Grip /><Tool i="cursor" t="选择" on /><Tri /><Sep /><Tool i="point" t="点" /><Sep /><Tool i="smart" t="智能布置" arrow="near" />
            <span className="ml-[198px]" /><Grip /><span className="-ml-1 h-5 w-6 bg-gradient-to-b from-white to-[#f0f0f0]" />
          </div>
          <Scene />
          <div className={bar + " h-[31px] bg-gradient-to-b from-[#fafafa] to-[#f0f0f0] pl-1"}>
            <Grip /><span className="-ml-2" /><Tool i="ortho" t="正交" /><Tool i="snap" t="对象捕捉" on /><Tool i="dyn" t="动态输入" on /><span className="-ml-1" /><Grip /><span className="-ml-2" />
            <Tool i="cross" t="交点" /><Tool i="perp" t="垂点" on /><Tool i="mid" t="中点" on /><Tool i="vertex" t="顶点" /><Tool i="coord" t="坐标" /><Grip />
            <div className="-ml-1 flex"><Combo v="不偏移" w="w-[60px]" /></div>
            <div className="-ml-1 flex shrink-0 items-center gap-[3px] text-[#777]"><span className="ml-px">X=</span><Spin v="0" w="w-[58px]" label="X" /><span className="mr-1">mm</span><span>Y=</span><Spin v="0" w="w-[58px]" label="Y" /><span>mm</span></div>
            <label className="flex shrink-0 items-center gap-2"><input type="checkbox" className="size-[11px] appearance-none border border-[#999]" />旋转</label>
            <div className="flex shrink-0 items-start gap-0.5 text-[#777]"><Spin v="0.000" w="w-[67px]" label="旋转角度" />°</div>
          </div>
          <RebarPanel />
        </div>
      </main>
      <footer className={"flex h-[22px] shrink-0 items-stretch gap-0.5 border-t border-[#bbb] bg-[#f4f4f4] py-px leading-4 whitespace-nowrap " + SONG}>
        <span className="w-[148px] shrink-0 border border-[#ddd] pl-px">X=15845 Y=48124</span>
        <span className="w-[78px] shrink-0 border border-[#ddd] pl-px">层高:2.9m</span>
        <span className="w-[98px] shrink-0 border border-[#ddd] pl-px">底标高:3.57m</span>
        <span className="w-12 shrink-0 border border-[#ddd]">1(10)</span>
        <span className="flex-1 border border-[#ddd]">按鼠标左键指定第一个角点，或拾取构件图元</span>
      </footer>
      <div className="flex h-[7px] shrink-0 overflow-hidden border-t border-[#1a3a60] bg-gradient-to-r from-[#2a78b0] via-[#3a98d8] to-[#123c70] text-white">
        <svg viewBox="0 0 430 6" preserveAspectRatio="none" className="h-1.5 w-[430px] shrink-0"><ellipse cx="28" cy="8" rx="16" ry="7" fill="#b8c8d0" /><ellipse cx="86" cy="7" rx="13" ry="5" fill="#2f9ce8" /><circle cx="99" cy="3" r="5" fill="#e8a820" /><path d="M136 4h14v2h-14z" fill="#9ad080" /><path d="M265 6q8-8 14-3v3z" fill="#6ac040" /><path d="M391 6l2-4 12 4z" fill="#f0c080" /></svg>
        {["bg-[#5a3038]", "bg-[#1088f0]", "bg-[#30a8f8]", "bg-[#70c060]", "bg-[#4a80d0]"].map((c, k) => (
          <span key={k} className={"mr-0.5 flex w-[60px] shrink-0 justify-center rounded-t-sm border border-b-0 border-[#123c60] " + (k === 4 ? "bg-[#e8e070]" : "bg-[#90c4e4]")}><span className={"mt-0.5 h-1.5 rounded-t-md " + (k === 0 ? "w-2 " : "w-7 ") + c} /></span>
        ))}
        <span className="ml-auto w-[220px] shrink-0 leading-4">2015</span><span className="w-[68px] shrink-0 leading-4">21:08</span>
      </div>
      <div className="absolute top-[125px] -right-[25px] flex size-[45px] items-center rounded-full border-2 border-white bg-gradient-to-b from-[#58c878] to-[#2fae50] pl-1 text-[12px] font-bold text-white shadow-[0_1px_4px_#555]">75</div>
      <div className="absolute right-1 bottom-[11px] flex h-6 w-[151px] items-center justify-around rounded-sm border border-[#5a98d0] bg-[#f2f7fc] px-1 text-[14px] font-bold text-[#3f70a8] shadow-[0_0_2px_#5a98d0]">
        <svg viewBox="0 0 16 16" className="size-4" fill="none"><path d="M1 1h14v14H1zM3.500 3.500h9v9h-9z" stroke="#3f70a8" strokeWidth="1.500" /><circle cx="8" cy="8" r="2.500" stroke="#3f70a8" strokeWidth="1.500" /><path d="M9 9l2 2" stroke="#3f70a8" /></svg>
        <span>中</span>
        <svg viewBox="0 0 14 14" className="size-3.5"><path d="M9 1c5 6 0 13-8 11C7 11 9 7 9 1z" fill="#4a7cb4" /></svg>
        <svg viewBox="0 0 14 14" className="size-3.5" fill="none"><circle cx="4" cy="7" r="1.500" stroke="#4a7cb4" /><path d="M10 5.500v2l-1 3" stroke="#4a7cb4" strokeWidth="2" /></svg>
        <svg viewBox="0 0 16 12" className="h-3 w-4"><rect y="2" width="16" height="10" rx="1" fill="#4a7cb4" /><path d="M2 4.500h12M2 7h12M2 9.500h12" stroke="#fff" strokeDasharray="2 1" /></svg>
        <svg viewBox="0 0 14 14" className="size-3.5"><circle cx="7" cy="3.500" r="3" fill="#4a7cb4" /><path d="M2 14c0-9 10-9 10 0z" fill="#4a7cb4" /></svg>
        <svg viewBox="0 0 14 14" className="size-3.5" fill="none"><path d="M2 12l6-6" stroke="#4a7cb4" strokeWidth="3" /><path d="M8 2.500a3 3 0 104 4" stroke="#4a7cb4" strokeWidth="2.500" /></svg>
      </div>
    </div>
  );
}
